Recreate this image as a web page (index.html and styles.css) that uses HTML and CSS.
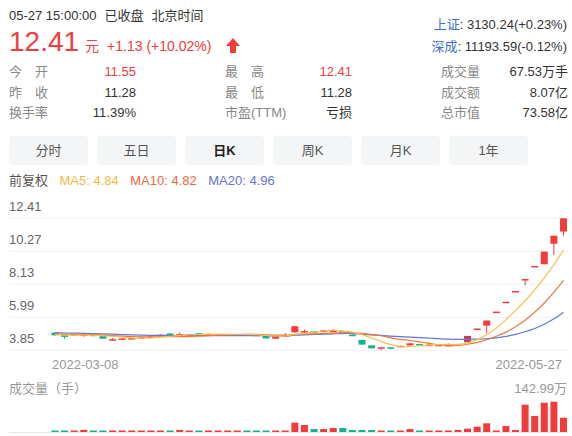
FILE: index.html
```html
<!DOCTYPE html>
<html lang="zh-CN">

<head>
    <meta charset="UTF-8">
    <meta name="viewport" content="width=device-width, initial-scale=1.0">
    <title>行情</title>
    <link rel="stylesheet" href="styles.css">
</head>

<body>
    <div class="head">
        <div class="main">
            <div class="time"><span>05-27 15:00:00</span><span>已收盘</span><span>北京时间</span></div>
            <div class="price">
                <span class="now">12.41</span><span class="unit">元</span><span class="chg">+1.13 (+10.02%)</span>
                <svg class="arrow" width="14" height="15" viewBox="0 0 14 15">
                    <path d="M7 0 L14 8 L10 8 L10 15 L4 15 L4 8 L0 8 Z" fill="#f23c3c"/>
                </svg>
            </div>
        </div>
        <div class="index">
            <div><span class="idx-name">上证</span>: 3130.24(+0.23%)</div>
            <div><span class="idx-name">深成</span>: 11193.59(-0.12%)</div>
        </div>
    </div>

    <div class="stats">
        <div class="cell"><span class="label">今 开</span><span class="val up">11.55</span></div>
        <div class="cell"><span class="label">最 高</span><span class="val up">12.41</span></div>
        <div class="cell"><span class="label">成交量</span><span class="val">67.53万手</span></div>
        <div class="cell"><span class="label">昨 收</span><span class="val">11.28</span></div>
        <div class="cell"><span class="label">最 低</span><span class="val">11.28</span></div>
        <div class="cell"><span class="label">成交额</span><span class="val">8.07亿</span></div>
        <div class="cell"><span class="label">换手率</span><span class="val">11.39%</span></div>
        <div class="cell"><span class="label">市盈(TTM)</span><span class="val">亏损</span></div>
        <div class="cell"><span class="label">总市值</span><span class="val">73.58亿</span></div>
    </div>

    <div class="tabs">
        <a href="javascript:;" class="tab">分时</a>
        <a href="javascript:;" class="tab">五日</a>
        <a href="javascript:;" class="tab active">日K</a>
        <a href="javascript:;" class="tab">周K</a>
        <a href="javascript:;" class="tab">月K</a>
        <a href="javascript:;" class="tab">1年</a>
    </div>

    <div class="legend">
        <span class="fq">前复权</span>
        <span class="ma5">MA5: 4.84</span>
        <span class="ma10">MA10: 4.82</span>
        <span class="ma20">MA20: 4.96</span>
    </div>

    <svg class="kline" id="kline" width="572" height="184"></svg>

    <div class="vol-head"><span>成交量（手）</span><span>142.99万</span></div>

    <svg class="vol" id="vol" width="572" height="38"></svg>

    <script>
        // 开 收 高 低 量(万手)
        var data = [
            [5.00, 4.82, 5.02, 4.80, 7], [4.90, 4.72, 4.92, 4.58, 7], [4.88, 4.90, 4.92, 4.86, 7],
            [4.85, 4.88, 4.98, 4.72, 10], [4.86, 4.85, 4.88, 4.83, 7], [4.78, 4.60, 4.80, 4.58, 7],
            [4.55, 4.57, 4.64, 4.45, 7], [4.60, 4.62, 4.64, 4.58, 7], [4.62, 4.64, 4.66, 4.60, 7],
            [4.66, 4.68, 4.72, 4.64, 7], [4.70, 4.74, 4.78, 4.68, 7], [4.82, 4.86, 4.90, 4.80, 7],
            [4.94, 4.88, 4.96, 4.86, 7], [4.88, 4.90, 5.00, 4.84, 10], [4.88, 4.89, 4.92, 4.86, 7],
            [4.96, 4.90, 4.98, 4.88, 7], [4.88, 4.90, 4.92, 4.86, 7], [4.88, 4.89, 4.91, 4.86, 7],
            [4.86, 4.88, 4.90, 4.84, 7], [4.86, 4.88, 4.90, 4.85, 7], [4.90, 4.87, 4.92, 4.86, 7],
            [4.86, 4.80, 4.88, 4.78, 7], [4.78, 4.62, 4.80, 4.60, 7], [4.60, 4.76, 4.78, 4.58, 7],
            [4.78, 4.82, 4.96, 4.74, 7], [5.02, 5.41, 5.43, 4.98, 44], [5.00, 5.10, 5.20, 4.95, 33],
            [5.08, 5.04, 5.10, 5.00, 14], [5.08, 5.14, 5.16, 5.06, 14], [5.10, 5.13, 5.22, 5.02, 19],
            [5.10, 5.06, 5.12, 5.04, 19], [4.86, 4.80, 4.88, 4.78, 9.5], [4.52, 4.22, 4.54, 4.20, 9.5],
            [4.17, 3.98, 4.18, 3.96, 9.5], [4.03, 4.05, 4.05, 3.85, 7], [4.05, 4.04, 4.05, 3.90, 7],
            [4.10, 4.14, 4.16, 4.08, 7], [4.17, 4.30, 4.32, 4.15, 14], [4.26, 4.22, 4.28, 4.20, 7],
            [4.20, 4.22, 4.37, 4.11, 7], [4.20, 4.21, 4.24, 4.18, 7], [4.18, 4.20, 4.30, 4.14, 7],
            [4.22, 4.26, 4.28, 4.20, 9.5], [4.37, 4.78, 4.78, 4.35, 15.6], [5.26, 5.26, 5.26, 5.20, 25],
            [5.45, 5.78, 5.78, 4.95, 41], [6.36, 6.36, 6.36, 6.36, 7], [7.00, 7.00, 7.00, 7.00, 28],
            [7.70, 7.70, 7.70, 7.70, 9.5], [8.47, 8.47, 8.47, 8.06, 129], [9.32, 9.32, 9.32, 9.25, 75.5],
            [9.43, 10.25, 10.25, 9.43, 138], [10.76, 11.28, 11.28, 10.01, 142.99], [11.55, 12.41, 12.41, 11.28, 67.53]
        ];
        // 可视区之前的收盘价, 用来算均线
        var prev = [5.06, 5.10, 5.08, 5.12, 5.05, 5.02, 5.06, 5.04, 5.00, 5.02, 4.98, 5.00, 4.96, 4.98, 4.94, 4.90, 4.92, 4.88, 4.86];

        var RED = '#f23c3c';
        var GREEN = '#16b38b';
        var TOP = 28.3;
        var BOTTOM = 160.3;
        var MIN = 3.85;
        var MAX = 12.41;
        var ns = 'http://www.w3.org/2000/svg';

        function add(parent, tag, attrs, text) {
            var el = document.createElementNS(ns, tag);
            for (var k in attrs) {
                el.setAttribute(k, attrs[k]);
            }
            if (text) el.textContent = text;
            parent.appendChild(el);
            return el;
        }

        function px(i) {
            return 55 + i * 9.594;
        }

        function py(p) {
            return BOTTOM - (p - MIN) * (BOTTOM - TOP) / (MAX - MIN);
        }

        var kline = document.getElementById('kline');

        // 网格和刻度
        var ticks = ['12.41', '10.27', '8.13', '5.99', '3.85'];
        for (var i = 0; i < ticks.length; i++) {
            var gy = TOP + i * 33;
            add(kline, 'line', { x1: 9, x2: 568, y1: gy, y2: gy, class: 'grid' });
            add(kline, 'text', { x: 9, y: gy - 7, class: 'tick' }, ticks[i]);
        }
        add(kline, 'text', { x: 52, y: 179, class: 'date' }, '2022-03-08');
        add(kline, 'text', { x: 562, y: 179, class: 'date', 'text-anchor': 'end' }, '2022-05-27');

        // 蜡烛
        for (var i = 0; i < data.length; i++) {
            var d = data[i];
            var x = px(i);
            var color = d[1] >= d[0] ? RED : GREEN;
            if (i == 43) color = '#c83c54';
            add(kline, 'line', { x1: x, x2: x, y1: py(d[2]), y2: py(d[3]), stroke: color, 'stroke-width': 1 });
            var bodyTop = py(Math.max(d[0], d[1]));
            var bodyH = Math.max(py(Math.min(d[0], d[1])) - bodyTop, 1.5);
            add(kline, 'rect', { x: x - 3.5, y: bodyTop, width: 7, height: bodyH, fill: color });
        }

        // 均线
        var closes = prev.concat(data.map(function(d) { return d[1]; }));

        function ma(n) {
            var pts = [];
            for (var i = 0; i < data.length; i++) {
                var idx = i + prev.length;
                var sum = 0;
                for (var j = idx - n + 1; j <= idx; j++) {
                    sum += closes[Math.max(j, 0)];
                }
                pts.push([px(i), py(sum / n)]);
            }
            return pts;
        }

        function smooth(pts) {
            var d = 'M' + pts[0][0].toFixed(2) + ',' + pts[0][1].toFixed(2);
            for (var i = 0; i < pts.length - 1; i++) {
                var p0 = pts[i - 1] || pts[i];
                var p1 = pts[i];
                var p2 = pts[i + 1];
                var p3 = pts[i + 2] || p2;
                d += ' C' + (p1[0] + (p2[0] - p0[0]) / 6).toFixed(2) + ',' + (p1[1] + (p2[1] - p0[1]) / 6).toFixed(2) +
                    ' ' + (p2[0] - (p3[0] - p1[0]) / 6).toFixed(2) + ',' + (p2[1] - (p3[1] - p1[1]) / 6).toFixed(2) +
                    ' ' + p2[0].toFixed(2) + ',' + p2[1].toFixed(2);
            }
            return d;
        }

        add(kline, 'path', { d: smooth(ma(20)), class: 'line', stroke: '#6577d8' });
        add(kline, 'path', { d: smooth(ma(10)), class: 'line', stroke: '#f0773d' });
        add(kline, 'path', { d: smooth(ma(5)), class: 'line', stroke: '#f7c04f' });

        // 成交量
        var vol = document.getElementById('vol');
        add(vol, 'line', { x1: 9, x2: 568, y1: 34.5, y2: 34.5, class: 'base' });
        for (var i = 0; i < data.length; i++) {
            var d = data[i];
            var barH = Math.max(d[4] / 142.99 * 30.3, 1.5);
            add(vol, 'rect', { x: px(i) - 3.5, y: 34 - barH, width: 7, height: barH, fill: d[1] >= d[0] ? RED : GREEN });
        }
    </script>
</body>

</html>
```

FILE: styles.css
```css
* {
    margin: 0;
    padding: 0;
    box-sizing: border-box;
}

a {
    text-decoration: none;
}

body {
    width: 572px;
    height: 436px;
    overflow: hidden;
    background-color: #fff;
    font-family: "Liberation Sans", "Noto Sans CJK SC", sans-serif;
    font-size: 13px;
    color: #333;
}

.head {
    display: flex;
    justify-content: space-between;
    height: 58px;
    padding: 0 5px 0 9px;
}

.time {
    padding-top: 6px;
    line-height: 20px;
}

.time span {
    margin-right: 8px;
}

.price {
    height: 32px;
    font-size: 28px;
    line-height: 32px;
    color: #f23c3c;
    white-space: nowrap;
}

.unit {
    margin-left: 6px;
    font-size: 14px;
    line-height: 1;
}

.chg {
    margin-left: 8px;
    font-size: 14px;
    line-height: 1;
}

.arrow {
    margin-left: 7px;
    vertical-align: -2px;
}

.index {
    padding-top: 14px;
    line-height: 22px;
    text-align: right;
}

.idx-name {
    color: #3a6fd8;
}

.stats {
    display: grid;
    grid-template-columns: repeat(3, 127px);
    column-gap: 89px;
    padding: 4px 0 0 9px;
    line-height: 20.5px;
}

.cell {
    display: flex;
    justify-content: space-between;
    white-space: nowrap;
}

.label {
    min-width: 39px;
    color: #888;
    text-align: justify;
    text-align-last: justify;
}

.val.up {
    color: #f23c3c;
}

.tabs {
    display: flex;
    gap: 9px;
    margin-top: 12.5px;
    padding-left: 9px;
}

.tab {
    width: 79px;
    height: 29px;
    line-height: 29px;
    text-align: center;
    background-color: #f4f5f7;
    border-radius: 4px;
    color: #555;
}

.tab.active {
    font-weight: bold;
    color: #222;
}

.legend {
    display: flex;
    gap: 11.5px;
    margin-top: 7px;
    padding-left: 9px;
    line-height: 18px;
}

.fq {
    color: #555;
}

.ma5 {
    color: #f5b846;
}

.ma10 {
    color: #f0673c;
}

.ma20 {
    color: #6474d8;
}

.kline,
.vol {
    display: block;
}

.grid {
    stroke: #f0f0f0;
    stroke-width: 1;
}

.base {
    stroke: #e4e4e4;
    stroke-width: 1;
}

.tick {
    font-size: 13px;
    fill: #666;
}

.date {
    font-size: 13px;
    fill: #999;
}

.line {
    fill: none;
    stroke-width: 1.2;
}

.vol-head {
    display: flex;
    justify-content: space-between;
    margin-top: 6px;
    padding: 0 5px 0 9px;
    line-height: 18px;
    color: #999;
}
```
